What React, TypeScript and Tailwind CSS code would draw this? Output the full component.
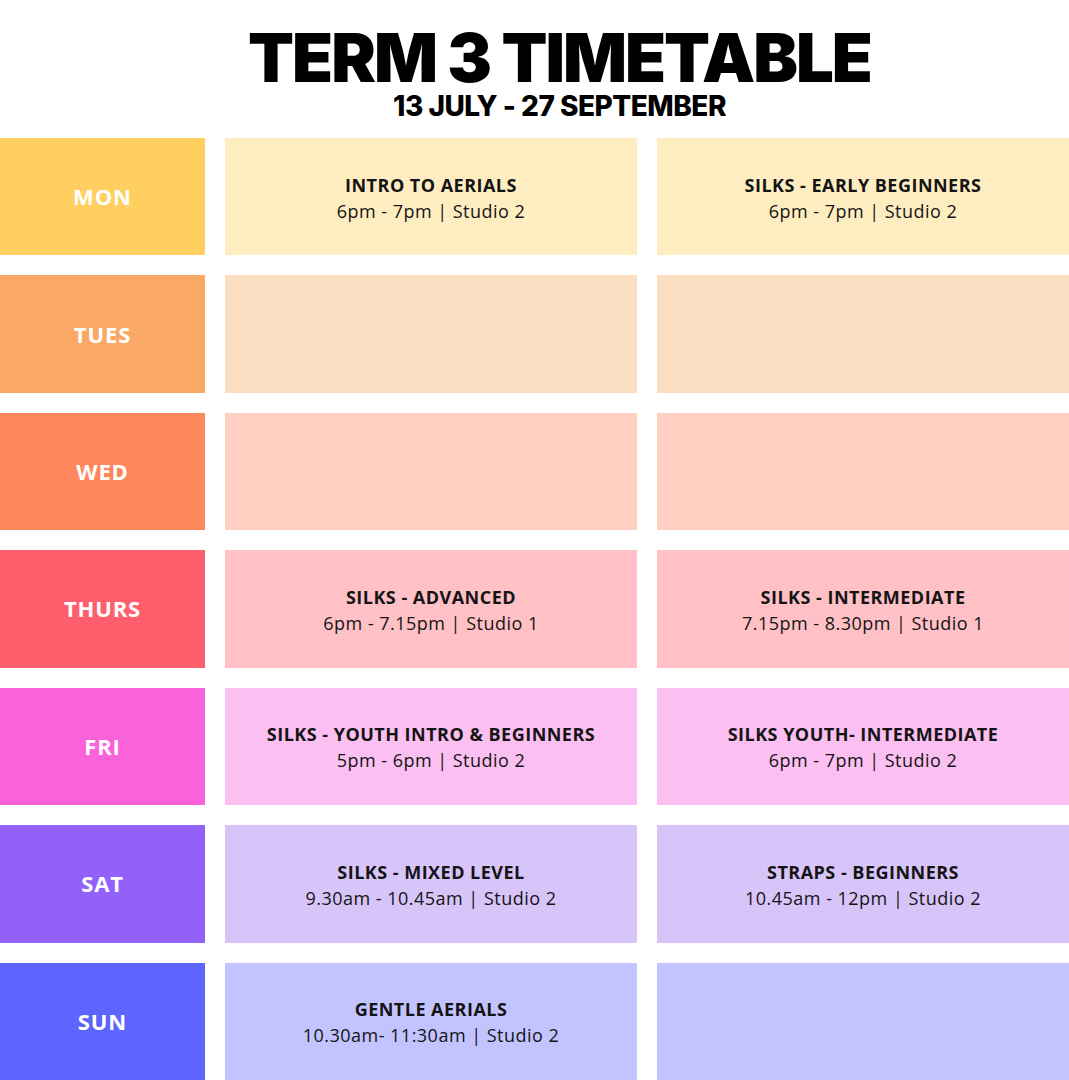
const rows = [
  { day: "MON", dayBg: "bg-[#ffd05f]", cellBg: "bg-[#ffedc2]", a: { t: "INTRO TO AERIALS", s: "6pm - 7pm | Studio 2" }, b: { t: "SILKS - EARLY BEGINNERS", s: "6pm - 7pm | Studio 2" } },
  { day: "TUES", dayBg: "bg-[#f9a865]", cellBg: "bg-[#fcdec3]" },
  { day: "WED", dayBg: "bg-[#ff875d]", cellBg: "bg-[#ffd0c2]" },
  { day: "THURS", dayBg: "bg-[#ff5e6d]", cellBg: "bg-[#ffc0c6]", a: { t: "SILKS - ADVANCED", s: "6pm - 7.15pm | Studio 1" }, b: { t: "SILKS - INTERMEDIATE", s: "7.15pm - 8.30pm | Studio 1" } },
  { day: "FRI", dayBg: "bg-[#fa62da]", cellBg: "bg-[#fbc0f1]", a: { t: "SILKS - YOUTH INTRO & BEGINNERS", s: "5pm - 6pm | Studio 2" }, b: { t: "SILKS YOUTH- INTERMEDIATE", s: "6pm - 7pm | Studio 2" } },
  { day: "SAT", dayBg: "bg-[#9261fa]", cellBg: "bg-[#d7c5fa]", a: { t: "SILKS - MIXED LEVEL", s: "9.30am - 10.45am | Studio 2" }, b: { t: "STRAPS - BEGINNERS", s: "10.45am - 12pm | Studio 2" } },
  { day: "SUN", dayBg: "bg-[#5e65fe]", cellBg: "bg-[#c3c4ff]", a: { t: "GENTLE AERIALS", s: "10.30am- 11:30am | Studio 2" } },
];

type Slot = { t: string; s: string };

function Cell({ bg, slot }: { bg: string; slot?: Slot }) {
  return (
    <div className={`${bg} flex flex-col items-center justify-center text-[#141414] pt-[2px] tracking-[0.03em]`}>
      {slot && (
        <>
          <div className="text-[18px] font-bold leading-[26px]">{slot.t}</div>
          <div className="text-[18px] leading-[26px]">{slot.s}</div>
        </>
      )}
    </div>
  );
}

export default function App() {
  return (
    <div className="w-[1069px] h-[1080px] bg-white flex flex-col overflow-hidden font-['Open_Sans',sans-serif]">
      {/* Header */}
      <div className="h-[138px] flex flex-col items-center pt-[24px] pl-[50px]">
        <h1 className="font-['Inter',sans-serif] font-black text-[67px] leading-[67px] tracking-[-2px] text-black">TERM 3 TIMETABLE</h1>
        <p className="font-['Inter',sans-serif] font-extrabold text-[28px] leading-[30px] tracking-[-0.5px] text-black">13 JULY - 27 SEPTEMBER</p>
      </div>

      {/* Timetable */}
      <div className="flex-1 grid grid-rows-7 gap-y-[20px]">
        {rows.map((r) => (
          <div key={r.day} className="grid grid-cols-[205px_412px_412px] gap-x-[20px]">
            <div className={`${r.dayBg} flex items-center justify-center text-white text-[22px] font-bold tracking-[0.04em]`}>{r.day}</div>
            <Cell bg={r.cellBg} slot={r.a} />
            <Cell bg={r.cellBg} slot={r.b} />
          </div>
        ))}
      </div>
    </div>
  );
}
